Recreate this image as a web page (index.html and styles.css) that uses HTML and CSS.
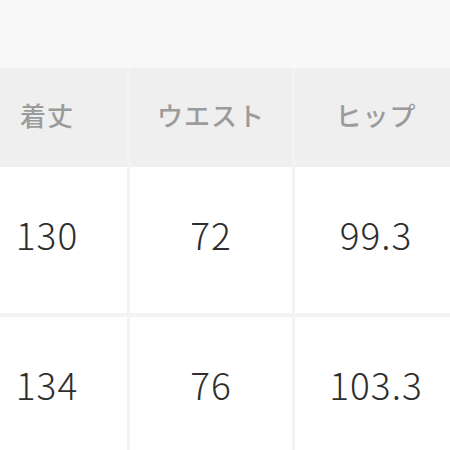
FILE: index.html
```html
<!DOCTYPE html>
<html lang="ja">
<head>
<meta charset="utf-8">
<link rel="stylesheet" href="styles.css">
</head>
<body>
<div class="page">
  <div class="top"></div>
  <div class="table">
    <div class="cell head">着丈</div>
    <div class="cell head">ウエスト</div>
    <div class="cell head">ヒップ</div>
    <div class="cell val">130</div>
    <div class="cell val">72</div>
    <div class="cell val">99.3</div>
    <div class="cell val">134</div>
    <div class="cell val">76</div>
    <div class="cell val">103.3</div>
  </div>
</div>
</body>
</html>
```
FILE: styles.css
```css
html, body {
  margin: 0;
  padding: 0;
  width: 450px;
  height: 450px;
  overflow: hidden;
  background: #f2f2f2;
}
.page {
  font-family: "Noto Sans CJK JP", "Noto Sans", sans-serif;
}
.top {
  height: 68px;
  background: #f8f8f8;
}
.table {
  display: grid;
  grid-template-columns: 160px 162px 162px;
  grid-template-rows: 95px 146px 146px;
  column-gap: 3px;
  row-gap: 4px;
  margin-left: -33px;
  width: 490px;
  background: #f3f3f3;
}
.cell {
  display: flex;
  align-items: center;
  justify-content: center;
}
.head {
  background: #efefef;
  color: #9b9b9b;
  font-size: 26px;
  font-weight: 500;
  letter-spacing: 1px;
  margin-bottom: -4px;
  padding-bottom: 6px;
}
.val {
  background: #ffffff;
  color: #2e2e2e;
  font-size: 37px;
  font-weight: 300;
  letter-spacing: 1px;
  padding-bottom: 12px;
}
```
